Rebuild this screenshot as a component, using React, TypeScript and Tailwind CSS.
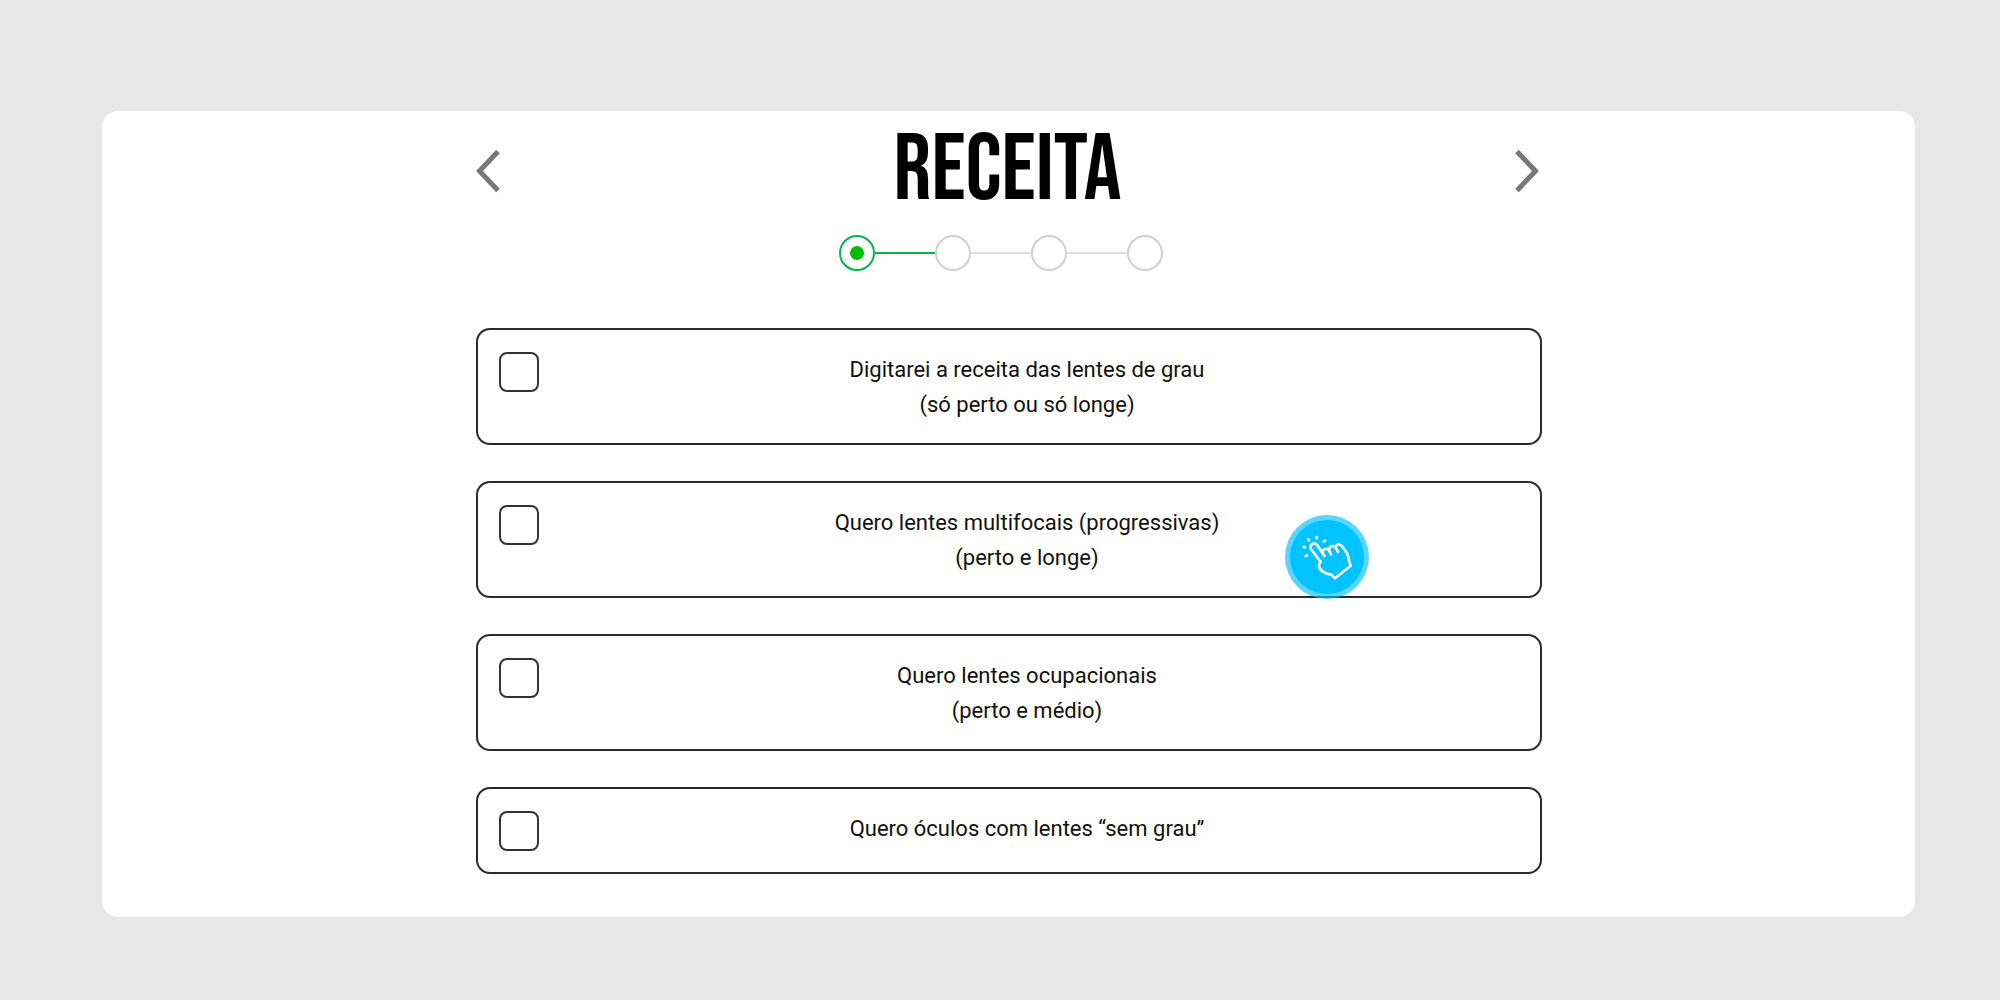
import { useState } from 'react';

const steps = ['Receita', 'Lentes', 'Tratamentos', 'Resumo'];

const options = [
  { id: 'simples', lines: ['Digitarei a receita das lentes de grau', '(só perto ou só longe)'] },
  { id: 'multifocal', lines: ['Quero lentes multifocais (progressivas)', '(perto e longe)'] },
  { id: 'ocupacional', lines: ['Quero lentes ocupacionais', '(perto e médio)'] },
  { id: 'sem-grau', lines: ['Quero óculos com lentes “sem grau”'] },
];

function Arrow({ direction }: { direction: 'left' | 'right' }) {
  return (
    <svg width="24" height="44" viewBox="0 0 24 44" fill="none" stroke="#777777" strokeWidth="5">
      <path d={direction === 'left' ? 'M22 2.5 3.5 22 22 41.5' : 'M2 2.5 20.5 22 2 41.5'} />
    </svg>
  );
}

function Stepper({ current }: { current: number }) {
  return (
    <ol className="mt-5 mr-4 flex items-center justify-center">
      {steps.map((step, i) => (
        <li key={step} aria-label={step} className="flex items-center">
          {i > 0 && (
            <span className={i === current + 1 ? 'h-0.5 w-15 bg-[#04b649]' : 'h-0.5 w-15 bg-[#dedede]'} />
          )}
          <span
            className={
              i === current
                ? 'flex size-9 items-center justify-center rounded-full border-2 border-[#04b649]'
                : 'flex size-9 items-center justify-center rounded-full border-2 border-[#cfcfcf]'
            }
          >
            {i === current && <span className="size-3.5 rounded-full bg-[#00bd0a]" />}
          </span>
        </li>
      ))}
    </ol>
  );
}

function TapHint() {
  return (
    <span className="pointer-events-none absolute top-8 left-[76%] flex size-[84px] items-center justify-center rounded-full bg-[#00bfff]/65">
      <span className="flex size-[74px] items-center justify-center rounded-full bg-[#00c3ff]">
        <svg
          width="50"
          height="46"
          viewBox="128 138 150 138"
          fill="none"
          stroke="white"
          strokeWidth="8"
          strokeLinecap="round"
          strokeLinejoin="round"
        >
          <path d="M195 204 174 172C166 160 148 170 155 183L184 222" />
          <path d="M195 204 190 194C189 183 203 178 209 188L215 199" />
          <path d="M209 188C208 174 223 170 229 179L236 192" />
          <path d="M229 179C229 168 242 166 248 175C259 187 268 201 269 218L274 233 227 271 216 260C199 259 178 247 179 231L184 221" />
          <path d="M172 147V151M147 154 149 157M133 177 137 178M139 204 143 202M197 158 193 161" />
        </svg>
      </span>
    </span>
  );
}

export default function App() {
  const [selected, setSelected] = useState<string | null>(null);

  return (
    <div className="min-h-screen bg-[#e7e7e7] pt-[111px] pr-[85px] pb-20 pl-[102px] font-['Roboto',sans-serif] text-[#111111]">
      <main className="rounded-2xl bg-white px-6 pt-4 pb-[43px]">
        <div className="mx-auto max-w-[1066px]">
          <header className="flex h-22 items-center justify-between pr-0.5">
            <button type="button" aria-label="Voltar">
              <Arrow direction="left" />
            </button>
            <h1 className="font-['Bebas_Neue','Liberation_Sans_Narrow',sans-serif] text-[94px] leading-22 font-normal text-black">
              RECEITA
            </h1>
            <button type="button" aria-label="Avançar">
              <Arrow direction="right" />
            </button>
          </header>

          <Stepper current={0} />

          <div className="mt-[57px] flex flex-col gap-9">
            {options.map((option) => (
              <label
                key={option.id}
                className="relative flex cursor-pointer items-start rounded-[14px] border-2 border-[#2b2b2b] pt-[22px] pr-6 pb-[21px] pl-[21px]"
              >
                <input
                  type="checkbox"
                  checked={selected === option.id}
                  onChange={() => setSelected(selected === option.id ? null : option.id)}
                  className="size-10 shrink-0 appearance-none rounded-lg border-2 border-[#333333] checked:bg-[#00bd0a]"
                />
                <span className="flex-1 text-center text-[22px] leading-[35px]">
                  {option.lines.map((line) => (
                    <span key={line} className="block">
                      {line}
                    </span>
                  ))}
                </span>
                {option.id === 'multifocal' && <TapHint />}
              </label>
            ))}
          </div>
        </div>
      </main>
    </div>
  );
}
